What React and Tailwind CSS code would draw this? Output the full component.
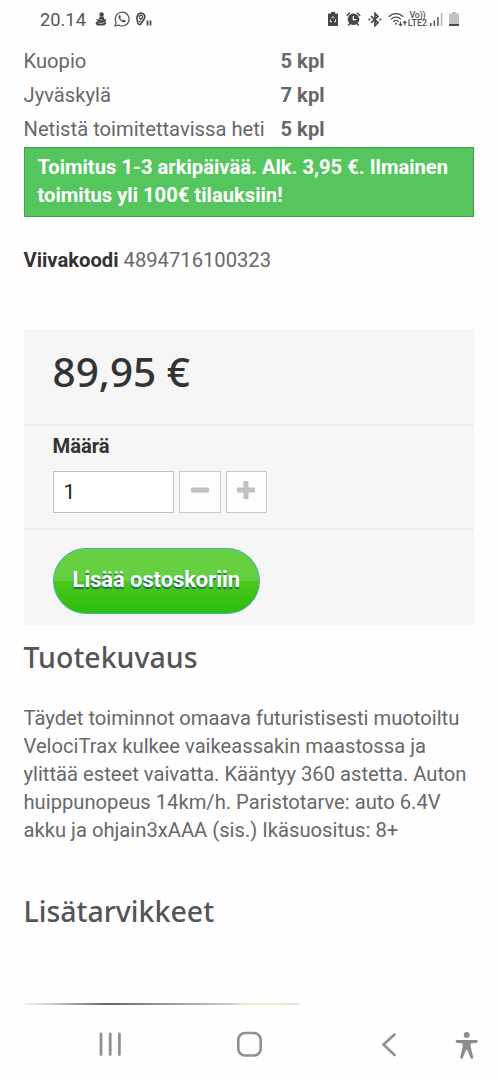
import React, { useState } from "react";

const stock = [
  { place: "Kuopio", amount: "5 kpl" },
  { place: "Jyväskylä", amount: "7 kpl" },
  { place: "Netistä toimitettavissa heti", amount: "5 kpl" },
];

function StatusBar() {
  return (
    <div className="h-11 flex items-start justify-between pl-10 pr-[39px] pt-[9px] text-[#555]">
      <div className="flex items-center h-5">
        <span className="text-[18.3px] leading-5 w-[55px] pt-[2px]">20.14</span>
        {/* snowman-like notification */}
        <svg width="12" height="14" viewBox="0 0 12 14" fill="#444">
          <circle cx="6.6" cy="2.4" r="2.2" />
          <path d="M4.6 4.4h4l.6 3.2 2.4-.8-1.2 2.4.8 2.4-2 2H2.4L.6 12l.4-2 2-1-2.2-2 3 .4z" />
          <path d="M3 10.6l3 1 3.4-1.2M4.6 7.6l3 .6" stroke="#ddd" strokeWidth=".8" fill="none" />
        </svg>
        {/* whatsapp */}
        <svg className="ml-[7px]" width="16" height="16" viewBox="0 0 16 16" fill="none">
          <path d="M1 15l1.1-3.7A6.9 6.9 0 1 1 4.7 14z" stroke="#505050" strokeWidth="1.2" />
          <path d="M5.3 4.2c-1.6 1.2-.6 3.400.9 5 1.700 1.900 4.200 3 5.400 1.300.4-.8.1-1-.4-1.300l-1.200-.6c-.5-.2-.7.8-1.200.8-1.100-.3-2.200-1.400-2.600-2.400 0-.5.8-.7.6-1.300l-.5-1.300c-.2-.4-.6-.4-1-.2z" fill="#505050" />
        </svg>
        {/* ear + pause */}
        <svg className="ml-[6px]" width="16" height="15" viewBox="0 0 16 15" fill="none">
          <path d="M1.200 8C.5 3.700 2 1.200 5 1.200c2.700 0 4.200 2 3.700 4.500C8.200 8.500 6 9 5.300 11.200 4.800 13 2.400 13 1.900 11z" stroke="#4a4a4a" strokeWidth="1.700" />
          <path d="M3 5.500c.3-3 3.700-2.800 3.700-.6 0 1.600-2 1.500-2.200 3.300M3 6.500l2 .6M3 10l1.500-1" stroke="#4a4a4a" strokeWidth="1.300" />
          <path d="M11.500 8.500v5M14.500 8.500v5" stroke="#4a4a4a" strokeWidth="1.800" />
        </svg>
      </div>

      <div className="flex items-center h-5">
        {/* battery saver */}
        <svg width="10" height="14" viewBox="0 0 10 14">
          <path d="M3 0h4v1.500h2.200a.8.800 0 0 1 .8.800v10.900a.8.800 0 0 1-.8.800H.8a.8.800 0 0 1-.8-.8V2.300a.8.800 0 0 1 .8-.8H3z" fill="#444" />
          <path d="M3.500 6.300L5 4.600l1.500 1.700M2.600 7.500l-.4 2.300h1.800M7.400 7.500l.4 2.300H6" stroke="#fff" strokeWidth=".9" fill="none" />
        </svg>
        {/* alarm */}
        <svg className="ml-[8px]" width="15" height="14" viewBox="0 0 15 14" fill="none">
          <circle cx="7.500" cy="7.300" r="5.800" fill="#484848" />
          <path d="M.8 3.800L4 .8M14.200 3.800L11 .8M3.800 11.500L2.300 13.500M11.200 11.500l1.500 2" stroke="#484848" strokeWidth="1.500" />
          <path d="M7.300 4v3.600h3" stroke="#fff" strokeWidth="1.200" />
        </svg>
        {/* bluetooth */}
        <svg className="ml-[7px]" width="14" height="15" viewBox="0 0 14 15" fill="none">
          <path d="M3 4.200l7 6.300-3 3.200V1.300l3 3.200L3 10.800" stroke="#484848" strokeWidth="1.700" />
          <circle cx="1.300" cy="7.500" r="1.100" fill="#484848" />
          <circle cx="12.400" cy="7.500" r="1.100" fill="#484848" />
        </svg>
        {/* wifi with traffic arrows */}
        <svg className="ml-[6px]" width="19" height="15" viewBox="0 0 19 15" fill="none" stroke="#505050">
          <path d="M.8 4.800c4-4.300 10.400-4.300 14.400 0M3 7.400c2.900-3 7.100-3 10 0M5.300 9.700c1.700-1.600 3.700-1.600 5.400 0" strokeWidth="1.300" />
          <circle cx="8" cy="11.700" r="1" fill="#505050" stroke="none" />
          <path d="M12.500 9.500v4M11 12l1.500 1.700L14 12M16.800 13.500v-4M15.300 11l1.500-1.700 1.500 1.700" strokeWidth="1.200" />
        </svg>
        <div className="flex flex-col items-center w-[21px] text-[9px] leading-[8px] font-medium">
          <span className="tracking-tight">Vo))</span>
          <span>LTE2</span>
        </div>
        {/* signal */}
        <svg className="ml-[2px]" width="13" height="14" viewBox="0 0 13 14">
          <path d="M0 11h1.500v3H0zM3.600 8.500h1.500V14H3.600zM7.200 5h1.500v9H7.200z" fill="#555" />
          <path d="M10.800 1h1.500v13h-1.500z" fill="#b5b5b5" />
        </svg>
        <svg className="ml-[6px]" width="10" height="14" viewBox="0 0 10 14">
          <path d="M3 0h4v1.500h2.200a.8.800 0 0 1 .8.800V12H0V2.300a.8.800 0 0 1 .8-.8H3z" fill="#c2c2c2" />
          <path d="M0 12h10v1.200a.8.800 0 0 1-.8.800H.8a.8.800 0 0 1-.8-.8z" fill="#484848" />
        </svg>
      </div>
    </div>
  );
}

function BuyBox() {
  const [qty, setQty] = useState(1);

  return (
    <div className="mt-[55px] h-[296px] bg-[#f6f6f6] text-[#333]">
      <div className="h-[97px] pl-[29px] pt-[16px] border-b-2 border-[#ededed]">
        <div className="font-['Noto_Sans'] font-medium text-[40.5px] leading-[54px]">89,95 €</div>
      </div>
      <div className="h-[104px] pl-[29px] pt-[6px] border-b-2 border-[#ededed]">
        <label className="block font-bold leading-7">Määrä</label>
        <div className="flex mt-[11px]">
          <input
            value={qty}
            onChange={(e) => setQty(Number(e.target.value) || 1)}
            className="w-[121px] h-[42px] px-[10px] bg-white border border-[#bdc2c9] text-[21px] text-[#222] outline-none"
          />
          <button
            onClick={() => setQty(Math.max(1, qty - 1))}
            className="ml-[5px] w-[42px] h-[42px] flex items-center justify-center bg-[#fdfdfd] border border-[#c8c9cc]"
          >
            <svg className="-mt-1" width="18" height="18" viewBox="0 0 18 18">
              <rect x="0" y="6.500" width="18" height="5" rx="1" fill="#c0c0c0" />
            </svg>
          </button>
          <button
            onClick={() => setQty(qty + 1)}
            className="ml-[5px] w-[41px] h-[42px] flex items-center justify-center bg-[#fdfdfd] border border-[#c8c9cc]"
          >
            <svg className="-mt-1" width="18" height="18" viewBox="0 0 18 18">
              <path d="M1 6.500h5.500V1a1 1 0 0 1 1-1h3a1 1 0 0 1 1 1v5.500H17a1 1 0 0 1 1 1v3a1 1 0 0 1-1 1h-5.500V17a1 1 0 0 1-1 1h-3a1 1 0 0 1-1-1v-5.500H1a1 1 0 0 1-1-1v-3a1 1 0 0 1 1-1z" fill="#c0c0c0" />
            </svg>
          </button>
        </div>
      </div>
      <div className="pl-[29px] pt-[18px]">
        <button className="w-[207.5px] h-[66px] pb-[2px] rounded-full border border-[#3fb59b] bg-[linear-gradient(to_bottom,#67d041_0%,#64d03f_49%,#4bc81d_51%,#2dbd0b_100%)] text-white text-[21.8px] font-bold [text-shadow:0px_2px_1px_#1b6b5d]">
          Lisää ostoskoriin
        </button>
      </div>
    </div>
  );
}

function NavBar() {
  return (
    <div className="h-[74px] flex items-start pt-[23px] pl-[98px]">
      <svg width="24" height="32" viewBox="0 0 24 32" stroke="#919191" strokeWidth="2.800" strokeLinecap="round">
        <path d="M3 5v20.500M12.200 5v20.500M21.400 5v20.500" />
      </svg>
      <svg className="ml-[114px]" width="28" height="32" viewBox="0 0 28 32" fill="none" stroke="#919191" strokeWidth="2.600">
        <rect x="2.300" y="4" width="22.400" height="22.500" rx="6.800" />
      </svg>
      <svg className="ml-[117px]" width="18" height="32" viewBox="0 0 18 32" fill="none" stroke="#919191" strokeWidth="2.600" strokeLinecap="round">
        <path d="M13.500 5.500L2.500 15.500l11 10.500" />
      </svg>
      <svg className="ml-[56px]" width="24" height="32" viewBox="0 0 24 32" fill="#8c8c8c">
        <circle cx="11.700" cy="6" r="3" />
        <path d="M2 11.100h19.400a1.300 1.300 0 0 1 0 2.700l-5.600.7v4l2.400 9.500a1.400 1.400 0 0 1-2.700.8L12.300 21h-1.200l-3.200 7.800a1.400 1.400 0 0 1-2.700-.8l2.400-9.500v-4L2 13.800a1.300 1.300 0 0 1 0-2.700z" />
      </svg>
    </div>
  );
}

export default function App() {
  return (
    <div className="w-[498px] h-[1080px] overflow-hidden bg-[#fefefe] font-[Roboto,sans-serif] text-[20.2px] text-[#686868]">
      <StatusBar />
      <main className="h-[962px] pl-[23.5px] pr-[24px]">
        {stock.map((row) => (
          <div key={row.place} className="flex h-[34px] leading-[34px]">
            <span className="w-[257px] whitespace-nowrap">{row.place}</span>
            <span className="font-bold">{row.amount}</span>
          </div>
        ))}

        <div className="mt-[1px] h-[70px] pl-[13px] pt-[5px] border border-[#4a9c50] bg-[#55c65e] text-white font-bold leading-7 whitespace-nowrap">
          Toimitus 1-3 arkipäivää. Alk. 3,95 €. Ilmainen
          <br />
          toimitus yli 100€ tilauksiin!
        </div>

        <div className="mt-[29px] leading-7">
          <span className="font-bold text-[#333]">Viivakoodi</span> 4894716100323
        </div>

        <BuyBox />

        <h2 className="mt-[13px] font-['Noto_Sans'] font-medium text-[28.5px] leading-[38px] text-[#555]">Tuotekuvaus</h2>
        <p className="mt-[28px] w-[450px] leading-7 whitespace-nowrap">
          Täydet toiminnot omaava futuristisesti muotoiltu
          <br />
          VelociTrax kulkee vaikeassakin maastossa ja
          <br />
          ylittää esteet vaivatta. Kääntyy 360 astetta. Auton
          <br />
          huippunopeus 14km/h. Paristotarve: auto 6.4V
          <br />
          akku ja ohjain3xAAA (sis.) Ikäsuositus: 8+
        </p>
        <h2 className="mt-[48px] font-['Noto_Sans'] font-medium text-[28.5px] leading-[38px] text-[#555]">Lisätarvikkeet</h2>

        {/* top edge of the first accessory picture */}
        <div className="mt-[73px] w-[276px] h-[2px] bg-[linear-gradient(to_right,#f4f4f4_0%,#ccc_10%,#666_30%,#8a8a8a_45%,#ccc_75%,#eeecb8_79%,#efedc4_88%,#e4e4dc_100%)]" />
      </main>
      <NavBar />
    </div>
  );
}
